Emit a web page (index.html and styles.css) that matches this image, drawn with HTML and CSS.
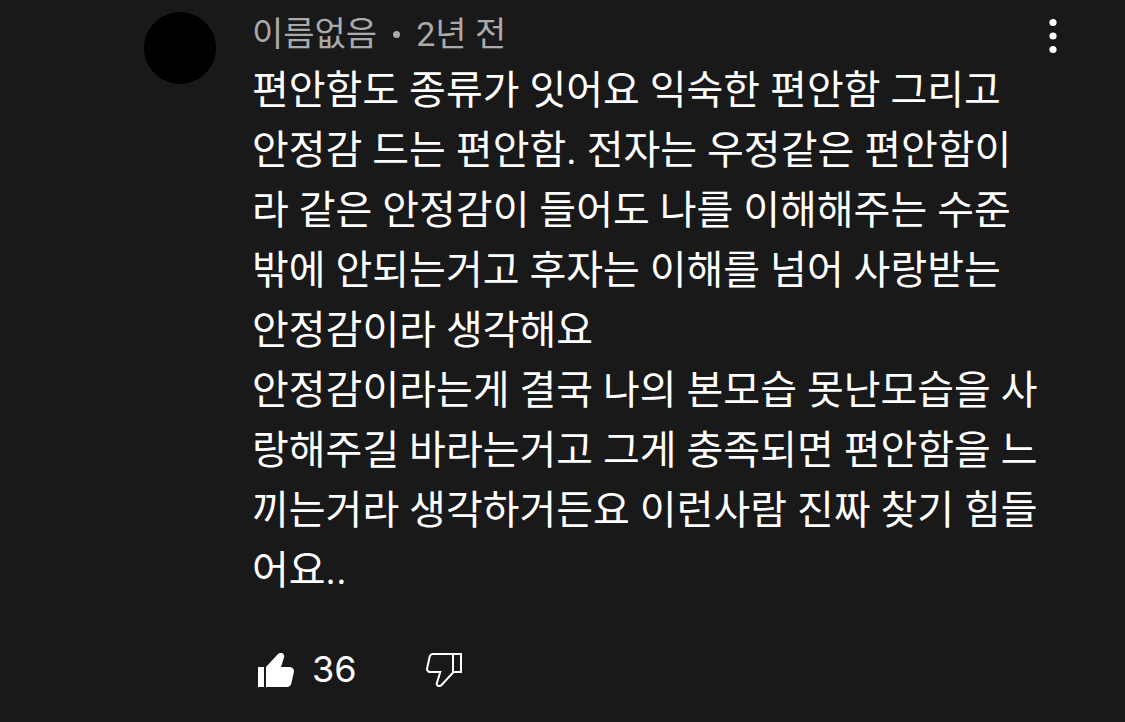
FILE: index.html
```html
<!DOCTYPE html>
<html lang="ko">
<head>
    <meta charset="UTF-8">
    <meta name="viewport" content="width=device-width, initial-scale=1.0">
    <title>댓글</title>
    <link rel="stylesheet" href="styles.css">
</head>
<body>
<article class="comment">
    <div class="avatar"></div>
    <div class="comment-body">
        <header class="comment-header">
            <div class="comment-meta">
                <span class="author">이름없음</span>
                <span class="separator"></span>
                <span class="date">2년 전</span>
            </div>
            <button class="icon-button" aria-label="메뉴">
                <svg viewBox="0 0 48 48">
                    <circle cx="24" cy="10.5" r="3.6"/>
                    <circle cx="24" cy="24" r="3.6"/>
                    <circle cx="24" cy="37.5" r="3.6"/>
                </svg>
            </button>
        </header>
        <p class="comment-text">편안함도 종류가 잇어요 익숙한 편안함 그리고 안정감 드는 편안함. 전자는 우정같은 편안함이라 같은 안정감이 들어도 나를 이해해주는 수준밖에 안되는거고 후자는 이해를 넘어 사랑받는 안정감이라 생각해요<br>안정감이라는게 결국 나의 본모습 못난모습을 사랑해주길 바라는거고 그게 충족되면 편안함을 느끼는거라 생각하거든요 이런사람 진짜 찾기 힘들어요..</p>
        <div class="actions">
            <button class="icon-button" aria-label="좋아요">
                <svg viewBox="0 0 24 24">
                    <path d="M3,11h3v10H3V11z M18.77,11h-4.23l1.52-4.94C16.38,5.03,15.54,4,14.38,4c-0.58,0-1.14,0.24-1.52,0.65L7,11v10h10.43c1.06,0,1.98-0.67,2.19-1.61l1.34-6C21.23,12.15,20.18,11,18.77,11z"/>
                </svg>
            </button>
            <span class="like-count">36</span>
            <button class="icon-button" aria-label="싫어요">
                <svg viewBox="0 0 24 24">
                    <path d="M17,4h-1H6.57C5.5,4,4.59,4.67,4.38,5.61l-1.34,6C2.77,12.85,3.82,14,5.23,14h4.23l-1.52,4.94C7.62,19.97,8.46,21,9.62,21c0.58,0,1.14-0.24,1.52-0.65L17,14h4V4H17z M10.4,19.67C10.21,19.88,9.92,20,9.62,20c-0.26,0-0.5-0.11-0.63-0.3c-0.07-0.1-0.15-0.26-0.09-0.47l1.52-4.94l0.4-1.29H9.46H5.23c-0.41,0-0.8-0.17-1.03-0.46c-0.12-0.15-0.25-0.4-0.18-0.72l1.34-6C5.46,5.35,5.97,5,6.57,5H16v8.61L10.4,19.67z M20,13h-3V5h3V13z"/>
                </svg>
            </button>
        </div>
    </div>
</article>
</body>
</html>
```

FILE: styles.css
```css
body {
    margin: 0;
    background-color: #191919;
    color: #ffffff;
    font-family: Roboto, "Noto Sans CJK KR", sans-serif;
}

.comment {
    display: flex;
    gap: 36px;
    padding: 12px 48px 24px 144px;
}

.avatar {
    flex: none;
    width: 72px;
    height: 72px;
    border-radius: 50%;
    background-color: #000000;
}

.comment-body {
    flex: 1;
    min-width: 0;
}

.comment-header {
    display: flex;
    align-items: center;
    justify-content: space-between;
}

.comment-meta {
    display: flex;
    align-items: center;
    gap: 16px;
    padding-bottom: 4px;
    font-size: 34px;
    line-height: 42px;
    color: #aaaaaa;
}

.separator {
    width: 7px;
    height: 7px;
    border-radius: 50%;
    background-color: #aaaaaa;
}

.comment-text {
    margin: 1px 0 44px;
    padding-right: 36px;
    font-size: 40px;
    line-height: 60px;
    word-break: break-all;
}

.actions {
    display: flex;
    align-items: center;
}

.like-count {
    margin: 0 63px 0 12px;
    font-family: Inter, sans-serif;
    font-size: 36px;
    line-height: 48px;
}

.icon-button {
    width: 48px;
    height: 48px;
    padding: 0;
    border: none;
    background: none;
    cursor: pointer;
}

.icon-button svg {
    display: block;
    width: 100%;
    height: 100%;
    fill: #ffffff;
}
```
